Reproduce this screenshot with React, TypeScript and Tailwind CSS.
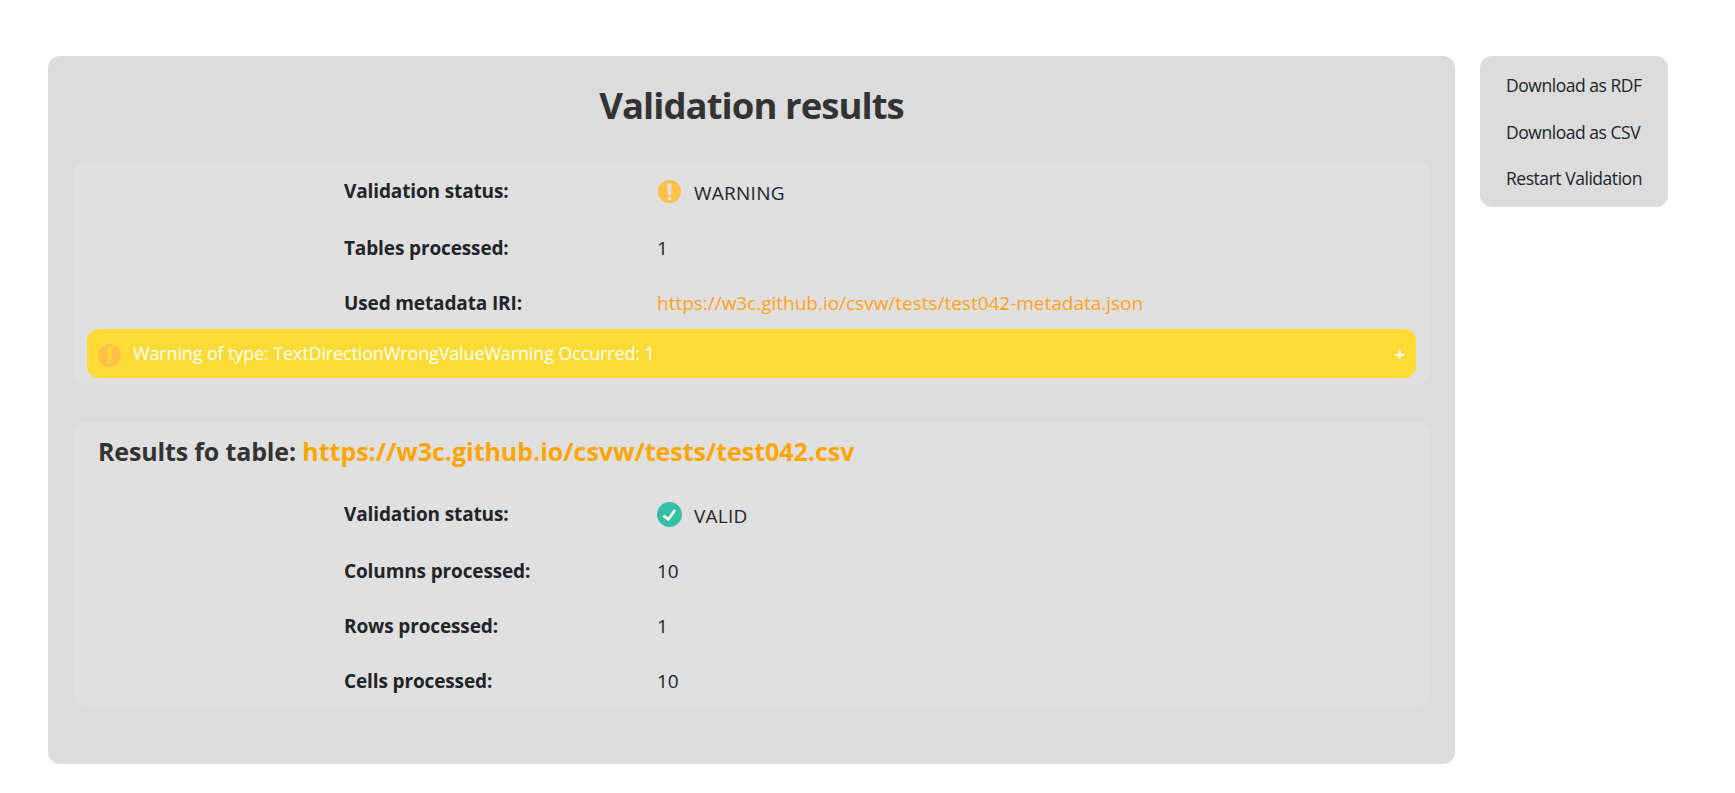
import type { ReactNode } from 'react';

function WarningIcon() {
  return (
    <svg className="size-[25px] shrink-0" viewBox="0 0 25 25" aria-hidden="true">
      <path
        fill="#ffc048"
        fillRule="evenodd"
        d="M12.5 1a11.5 11.5 0 1 0 0 23a11.5 11.5 0 0 0 0-23ZM12.5 4.3c1.5 0 2.3.8 2.2 2.2l-.5 8.4c-.1.9-.7 1.4-1.7 1.4s-1.6-.5-1.7-1.4l-.5-8.4c-.1-1.4.7-2.2 2.2-2.2ZM12.5 17.6a1.9 1.9 0 1 1 0 3.8a1.9 1.9 0 0 1 0-3.8Z"
      />
    </svg>
  );
}

function ValidIcon() {
  return (
    <svg className="size-[25px] shrink-0" viewBox="0 0 25 25" aria-hidden="true">
      <circle cx="12.5" cy="12.5" r="12.5" fill="#34bfa7" />
      <path d="M6.4 13.6 11.3 17.4 18 8" fill="none" stroke="#fff" strokeWidth="2.6" />
    </svg>
  );
}

function Row({ label, children, tall }: { label: string; children: ReactNode; tall?: boolean }) {
  return (
    <div className={tall ? 'flex h-[59px] items-center' : 'flex h-[55px] items-center'}>
      <div className="w-[313px] text-[19px] leading-7 font-bold tracking-[-0.13px]">{label}</div>
      <div>{children}</div>
    </div>
  );
}

function Status({ icon, text }: { icon: ReactNode; text: string }) {
  return (
    <div className="flex items-center gap-3">
      <span className="pt-0.5">{icon}</span>
      <span className="pt-1 tracking-[0.25px]">{text}</span>
    </div>
  );
}

const actions = ['Download as RDF', 'Download as CSV', 'Restart Validation'];

export default function App() {
  return (
    <div className="flex min-h-screen items-start gap-[25px] bg-white pt-14 pl-12 font-['Open_Sans',sans-serif] text-[19px] leading-7 text-[#212529]">
      <main className="h-[708px] w-[1407px] rounded-xl bg-[#dcdcdc] px-[25px]">
        <h1 className="h-[105px] pt-[22px] text-center text-[36.5px] leading-[54px] font-bold tracking-[-0.95px] text-[#333]">
          Validation results
        </h1>

        <section className="h-[223px] rounded-xl bg-[#e0e0e0]">
          <div className="h-[168px] pl-[271px]">
            <Row label="Validation status:" tall>
              <Status icon={<WarningIcon />} text="WARNING" />
            </Row>
            <Row label="Tables processed:">1</Row>
            <Row label="Used metadata IRI:">
              <a href="#" className="tracking-[-0.02px] text-[#ffa21c]">
                https://w3c.github.io/csvw/tests/test042-metadata.json
              </a>
            </Row>
          </div>
          <button className="mx-[14px] flex h-[49px] w-[1329px] items-center rounded-xl bg-[#fddb35] pr-[11px] pl-[10px] text-[18px] text-white">
            <span className="pt-[3px]">
              <WarningIcon />
            </span>
            <span className="ml-[11px] pb-px tracking-[-0.14px]">
              Warning of type: TextDirectionWrongValueWarning Occurred: 1
            </span>
            <span className="ml-auto pt-px font-bold">+</span>
          </button>
        </section>

        <section className="mt-[38px] h-[285px] rounded-xl bg-[#e0e0e0]">
          <h2 className="h-[62px] pt-[11px] pl-[25px] text-[25px] leading-9 font-bold tracking-[-0.15px] text-[#333]">
            Results fo table:{' '}
            <a href="#" className="tracking-[-0.02px] text-[#ffa500]">
              https://w3c.github.io/csvw/tests/test042.csv
            </a>
          </h2>
          <div className="pl-[271px]">
            <Row label="Validation status:" tall>
              <Status icon={<ValidIcon />} text="VALID" />
            </Row>
            <Row label="Columns processed:">10</Row>
            <Row label="Rows processed:">1</Row>
            <Row label="Cells processed:">10</Row>
          </div>
        </section>
      </main>

      <aside className="flex h-[151px] w-[188px] flex-col rounded-xl bg-[#dcdcdc] pt-[6px] pl-[26px]">
        {actions.map((action) => (
          <a key={action} href="#" className="text-[17.5px] leading-[46.5px] tracking-[-0.46px] whitespace-nowrap">
            {action}
          </a>
        ))}
      </aside>
    </div>
  );
}
